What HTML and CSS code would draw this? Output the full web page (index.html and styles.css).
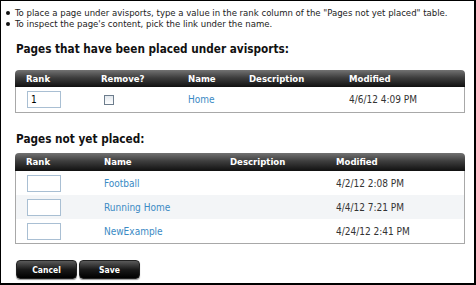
FILE: index.html
```html
<!DOCTYPE html>
<html>
<head>
<meta charset="utf-8">
<link rel="stylesheet" href="styles.css">
</head>
<body>
<div class="frame">
  <ul class="tips">
    <li>To place a page under avisports, type a value in the rank column of the "Pages not yet placed" table.</li>
    <li>To inspect the page's content, pick the link under the name.</li>
  </ul>

  <h2 class="heading">Pages that have been placed under avisports:</h2>
  <table class="grid placed">
    <colgroup>
      <col class="c1-rank"><col class="c1-remove"><col class="c1-name"><col class="c1-desc"><col>
    </colgroup>
    <thead>
      <tr><th>Rank</th><th>Remove?</th><th>Name</th><th>Description</th><th>Modified</th></tr>
    </thead>
    <tbody>
      <tr>
        <td><input class="rank" type="text" value="1"></td>
        <td><span class="check"></span></td>
        <td><a class="link">Home</a></td>
        <td></td>
        <td>4/6/12 4:09 PM</td>
      </tr>
    </tbody>
  </table>

  <h2 class="heading second">Pages not yet placed:</h2>
  <table class="grid pending">
    <colgroup>
      <col class="c2-rank"><col class="c2-name"><col class="c2-desc"><col>
    </colgroup>
    <thead>
      <tr><th>Rank</th><th>Name</th><th>Description</th><th>Modified</th></tr>
    </thead>
    <tbody>
      <tr>
        <td><input class="rank" type="text"></td>
        <td><a class="link">Football</a></td>
        <td></td>
        <td>4/2/12 2:08 PM</td>
      </tr>
      <tr class="alt">
        <td><input class="rank" type="text"></td>
        <td><a class="link">Running Home</a></td>
        <td></td>
        <td>4/4/12 7:21 PM</td>
      </tr>
      <tr>
        <td><input class="rank" type="text"></td>
        <td><a class="link">NewExample</a></td>
        <td></td>
        <td>4/24/12 2:41 PM</td>
      </tr>
    </tbody>
  </table>

  <div class="actions">
    <button class="btn">Cancel</button>
    <button class="btn">Save</button>
  </div>
</div>
</body>
</html>
```

FILE: styles.css
```css
html, body {
  margin: 0;
  padding: 0;
  background: #fff;
}
body {
  font-family: "DejaVu Sans Condensed", "DejaVu Sans", sans-serif;
  font-size: 10px;
  color: #222;
}
.frame {
  width: 476px;
  height: 285px;
  box-sizing: border-box;
  border: 1px solid #000;
  border-right-width: 2px;
  border-bottom-width: 2px;
  padding: 0 9px 0 14px;
  overflow: hidden;
}
.tips {
  margin: 6px 0 0 0;
  padding: 0;
  list-style: none;
  line-height: 11px;
  font-size: 9.5px;
  color: #222;
}
.tips li {
  display: flex;
  align-items: center;
  margin-left: -9px;
  white-space: nowrap;
}
.tips li::before {
  content: "";
  flex: none;
  width: 4px;
  height: 4px;
  border-radius: 50%;
  background: #111;
  margin-right: 5px;
}
.heading {
  margin: 13px 0 0 1px;
  font-size: 11.7px;
  font-weight: bold;
  line-height: 15px;
  color: #111;
}
.heading.second {
  margin-top: 19px;
}
.grid {
  margin-top: 13px;
  width: 450px;
  border-collapse: separate;
  border-spacing: 0;
  table-layout: fixed;
}
.grid.pending {
  margin-top: 6px;
}
.c1-rank { width: 75px; }
.c1-remove { width: 87px; }
.c1-name { width: 61px; }
.c1-desc { width: 100px; }
.c2-rank { width: 78px; }
.c2-name { width: 126px; }
.c2-desc { width: 106px; }
.grid th {
  height: 17px;
  padding: 0 0 0 11px;
  text-align: left;
  font-size: 9.5px;
  font-weight: bold;
  color: #fff;
  background: linear-gradient(#727272, #3e3e3e 45%, #101010 100%);
  line-height: 17px;
}
.grid.pending th {
  height: 18px;
  line-height: 18px;
}
.grid th:first-child {
  border-top-left-radius: 4px;
}
.grid th:last-child {
  border-top-right-radius: 4px;
}
.grid td {
  height: 24px;
  padding: 0 0 0 11px;
  font-size: 10px;
  color: #333;
  vertical-align: middle;
}
.grid.placed td {
  height: 25px;
}
.grid td:first-child {
  border-left: 1px solid #a8a8a8;
}
.grid td:last-child {
  border-right: 1px solid #a8a8a8;
}
.grid tbody tr:last-child td {
  border-bottom: 1px solid #a8a8a8;
}
.grid tr.alt td {
  background: #f3f5f7;
}
.rank {
  display: block;
  width: 34px;
  height: 17px;
  box-sizing: border-box;
  border: 1px solid #a9bfd3;
  padding: 0 0 0 3px;
  margin: 0;
  font-family: "DejaVu Sans Condensed", "DejaVu Sans", sans-serif;
  font-size: 10px;
  color: #000;
  background: #fff;
  outline: none;
}
.check {
  display: block;
  width: 8px;
  height: 8px;
  margin-left: 3px;
  border: 1px solid #6d7d8d;
  background: linear-gradient(#e3e8ee, #ffffff);
}
.link {
  color: #3a8ac4;
  text-decoration: none;
}
.actions {
  display: flex;
  gap: 2px;
  margin-top: 16px;
  margin-left: 1px;
}
.btn {
  width: 61px;
  height: 19px;
  padding: 0;
  border: 1px solid #222;
  border-radius: 4px;
  background: linear-gradient(#5a5a5a, #1a1a1a 50%, #000);
  color: #fff;
  font-family: "DejaVu Sans Condensed", "DejaVu Sans", sans-serif;
  font-size: 8.5px;
  font-weight: bold;
  box-shadow: 0 1px 1px rgba(0,0,0,0.4);
}
```
